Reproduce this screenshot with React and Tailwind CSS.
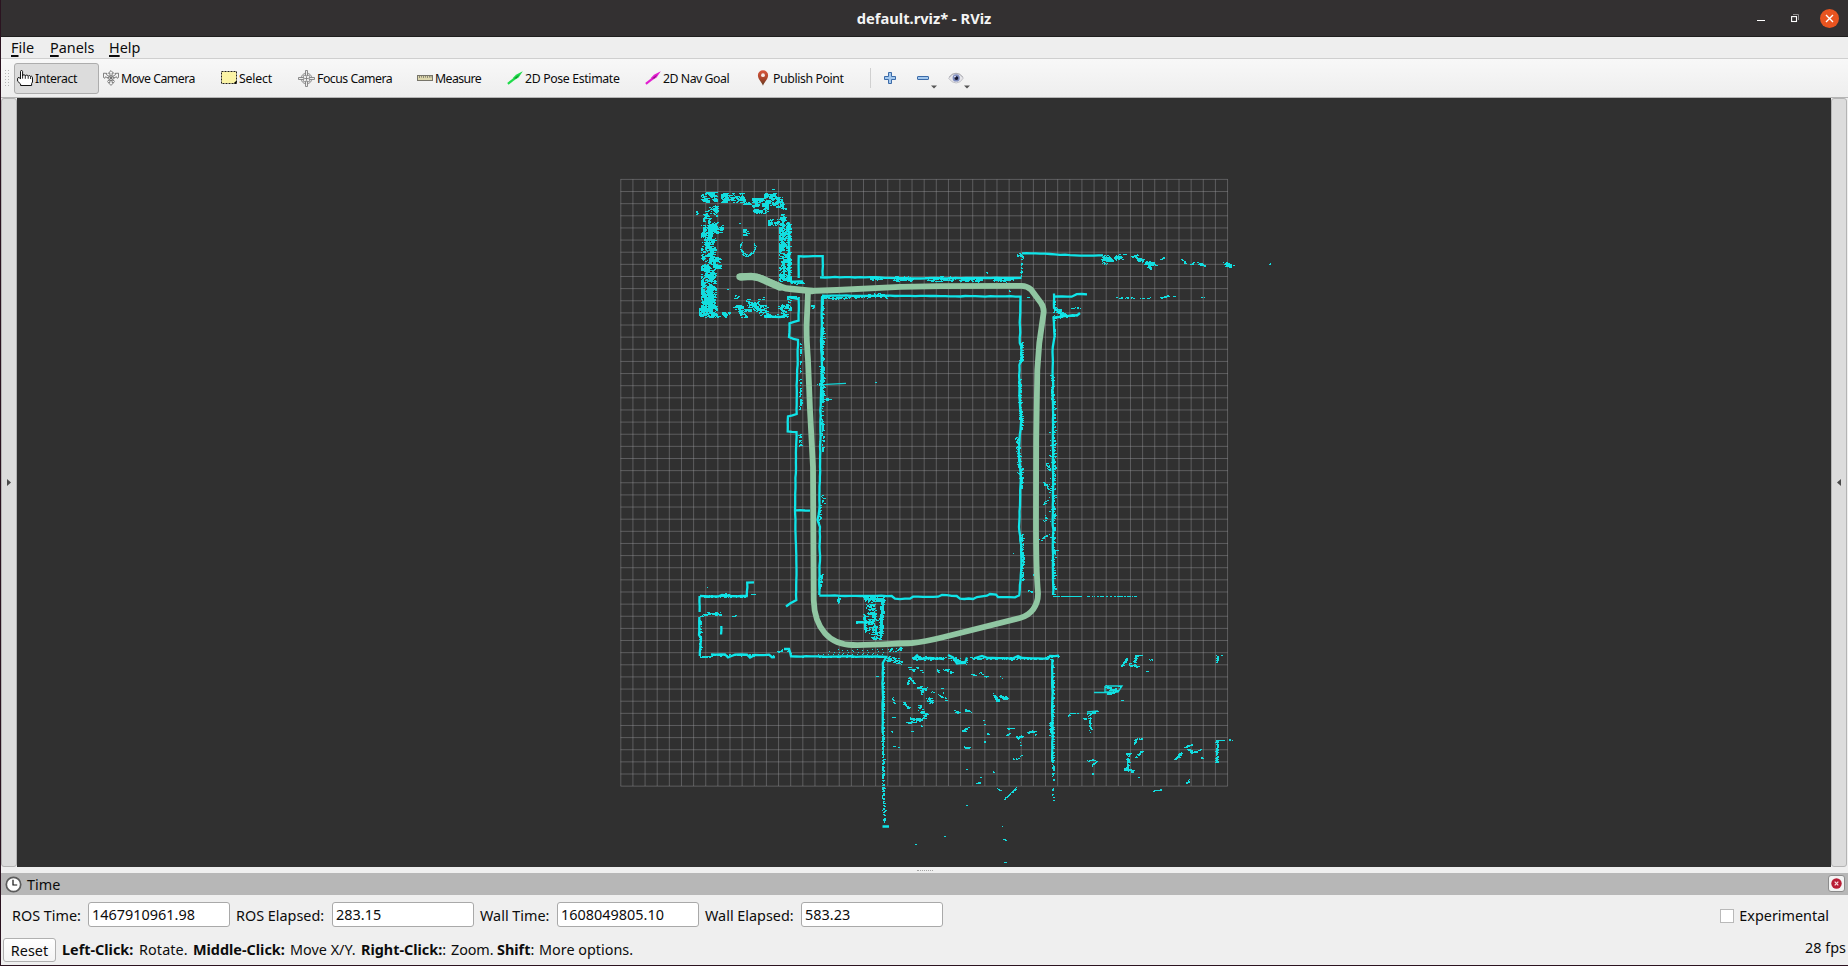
import React from "react";

/* ---------- point cloud ---------- */

let seed = 20201215;
function rnd() {
  seed = (seed * 1664525 + 1013904223) % 4294967296;
  return seed / 4294967296;
}
const gauss = () => (rnd() + rnd() + rnd() - 1.5) / 1.5;

// Straight or bent walls seen by the scanner.
const WALLS = [
  [[798.7, 278], [798.7, 256.2], [822.7, 256.2], [822.7, 276]],
  [[820, 277.3], [870, 277.2], [900, 278.4], [1021.5, 277.8]],
  [[822, 295.7], [900, 295.8], [1020.5, 296.6], [1019.8, 343], [1021.5, 347], [1021.8, 359], [1019.4, 365], [1019.4, 397], [1021.2, 420], [1018.8, 450], [1020.8, 480], [1019, 527], [1021.2, 545], [1021.2, 570], [1019.3, 595]],
  [[789, 297], [798.6, 299], [798.6, 320.7], [789.5, 323.3], [789, 337], [798, 340], [796.7, 400], [796.7, 414], [788, 416.5], [787.7, 431.5], [796.5, 432], [795.5, 483], [795, 510], [796.3, 560], [796.3, 600], [790, 603.5], [786, 606.5]],
  [[822, 297], [821.2, 345], [822, 370], [820.8, 400], [820, 467], [819.3, 510], [817.5, 520], [820, 527], [819.3, 595]],
  [[819.3, 595.5], [891.7, 596], [895, 598.7], [910, 598.7], [913, 596.7], [938, 596.7], [942, 595], [956.7, 596], [960, 598.7], [973, 599], [977, 597], [987, 595.7], [990, 594], [996, 594.5], [998, 597], [1015, 597.3], [1020, 595]],
  [[1054, 293.5], [1054, 308], [1062, 314]],
  [[1054, 296.7], [1071.7, 296.7], [1076.7, 294.2], [1087, 294.3]],
  [[1080, 313], [1077, 315.5], [1064, 316], [1053.5, 317.5], [1054.6, 336], [1052.8, 347], [1052.8, 400], [1053, 500], [1053, 595]],
  [[1022, 253.3], [1040, 253.6], [1080, 255.6], [1103, 255.3]],
  [[700, 596], [718, 596.5], [722, 595], [731, 596], [746.7, 596], [747.2, 582.7], [754, 582.3]],
  [[699.6, 596], [699.6, 612]],
  [[699.4, 617], [699, 635], [701, 638], [699.8, 656]],
  [[711, 654.5], [725, 654.5], [728, 657.5], [735, 654.6], [747, 654.7], [750, 657.5], [755, 655], [769, 654.7], [772, 657.2], [775, 657]],
  [[784, 649], [789, 649], [791, 656.3], [886, 656.8]],
  [[887, 656], [882.8, 663], [882.7, 733]],
  [[1052.3, 659], [1052.3, 762]],
  [[913, 659], [917, 655.5], [920, 659], [930, 658], [944, 659]],
  [[948, 655], [953, 657.5], [957, 663.5], [965, 663], [967, 657.5]],
  [[975, 658], [982, 656], [988, 658], [1013, 658.3], [1018, 656], [1022, 658], [1048, 658.5], [1050, 656], [1059, 655.7]],
  [[790, 281.5], [803, 281.5]],
  [[795, 510.3], [810, 510.7]],
  [[856, 622.3], [873, 622.3]],
  [[721.3, 626], [721, 634.5]],
  [[882.5, 826.5], [889, 826.5]],
  [[764, 316.6], [780, 317], [787, 315]],
  [[788.5, 222], [789.3, 281]],
];

const THIN = [
  [[826, 384.4], [846, 383.4]],
  [[1094, 692.5], [1112, 692.5]],
  [[1105, 686], [1122, 686], [1118, 692], [1105, 692], [1105, 686]],
  [[1087, 712], [1098, 711]],
];

// Extra returns scattered around a segment: x1, y1, x2, y2, spread, count
const SCATTER = [
  [870, 278, 882, 278, 3, 40], [893, 278.5, 912, 279, 4, 90],
  [900, 279, 910, 279, 3, 30], [926, 279, 954, 279, 4, 110], [960, 279, 982, 279, 4, 110], [993, 279, 1012, 279, 4, 100],
  [822, 297.5, 850, 297.5, 2, 60], [868, 295, 885, 295, 4, 60], [850, 297, 868, 297, 1.5, 16],
  [800, 342, 799.5, 410, 0.6, 40], [801, 400, 799, 405, 2, 14], [799, 432, 800, 445, 2.5, 24],
  [822, 295, 822, 410, 1.2, 170], [823, 326, 823, 342, 2.5, 40], [822, 366, 822, 402, 3, 130], [825, 399, 830, 399, 2, 26],
  [822, 410, 822, 450, 2, 60], [822, 495, 823, 503, 2, 14], [821, 574, 820, 588, 1.4, 30], [820, 505, 819, 523, 2, 24],
  [818, 384, 824, 384, 2, 12], [806, 306, 814, 306, 3, 26], [790, 282, 803, 283, 2, 36], [790, 297, 798, 297, 2, 24],
  [1021, 343, 1021, 361, 2.6, 80], [1019, 380, 1020, 420, 2, 100], [1021, 410, 1021, 430, 2.4, 50], [1017, 436, 1020, 480, 3, 80], [1021, 468, 1021, 488, 2.2, 60], [1022, 535, 1022, 580, 2.2, 100],
  [1054, 300, 1054, 340, 1.3, 40], [1052, 375, 1052, 400, 2.6, 44], [1054, 400, 1054, 480, 1.7, 80], [1054, 480, 1054, 595, 1.4, 90], [1054, 550, 1057, 550, 1.6, 14],
  [1055, 309, 1064, 316, 4, 70], [1070, 308, 1080, 308, 1.5, 14], [1053, 318, 1080, 314, 1.2, 30],
  [1020.7, 258, 1020.7, 277, 0.5, 16], [1016, 254, 1023, 257, 3, 20],
  [1115, 297.7, 1153, 297.7, 0.7, 28], [1160, 298, 1168, 295.5, 1.4, 28], [1173, 296, 1174, 296, 1.5, 4], [1198, 297, 1205, 297, 1, 4],
  [1053, 596, 1080, 596, 0.6, 40], [1080, 596, 1141, 596, 0.6, 34],
  [1046, 463, 1049, 468, 2.4, 16], [1044, 482, 1049, 491, 3, 18], [1043, 505, 1047, 499, 1.3, 8], [1043, 522, 1046, 516, 1.5, 8], [1040, 540, 1049, 534, 1.6, 14], [1032, 574, 1035, 575, 1.5, 8], [1028, 590, 1032, 592, 1.4, 7], [1050, 430, 1050, 560, 2.4, 22],
  [701, 596, 746, 596, 2, 90], [725, 594.5, 729, 594.5, 2, 16], [749, 594, 754, 594, 0.8, 4],
  [700, 616, 706, 614, 1.4, 20], [706, 613, 720, 614, 2.6, 56], [732, 617, 735, 614, 1.6, 6],
  [700, 620, 700, 655, 1.5, 44], [700, 656.5, 711, 656, 1.2, 34], [711, 655, 775, 655, 1.6, 70], [777, 652, 784, 649, 1.2, 12], [788, 650, 792, 656, 1.6, 20],
  [793, 656, 886, 657, 1, 60],
  [888, 650, 902, 648, 3, 26], [887, 658, 900, 662, 5, 60], [912, 658, 947, 658, 2.4, 90],
  [950, 658, 967, 662, 3, 40], [970, 658, 1050, 658.5, 1.8, 120], [1047, 656, 1059, 656, 1.2, 24],
  [882.7, 665, 882.7, 740, 1.4, 110], [882.5, 735, 882.7, 790, 1.6, 120], [882.7, 785, 883.7, 822, 1.7, 56],
  [1052.5, 660, 1052.5, 780, 1.3, 130], [1050, 722, 1051, 737, 2.8, 34], [1052.6, 785, 1052.8, 802, 0.5, 7],
  [838, 598, 839, 603, 2.4, 30], [863, 596, 866, 602, 2, 24], [864, 613, 865, 632, 2, 50], [855, 622, 873, 622, 1.6, 26],
  [866, 598, 882, 600, 3, 110], [882, 598, 880, 638, 2.6, 300], [870, 602, 874, 636, 8, 190], [871, 638, 881, 638, 2, 40],
  [908, 668, 913, 671, 3.4, 12], [917, 667, 923, 672, 2, 12], [937, 668, 938, 672, 2, 8], [943, 668, 952, 672, 3, 20],
  [907, 684, 909, 678, 1.4, 24], [909, 678, 914, 683, 1.4, 22], [918, 687, 925, 689, 3, 38], [921, 690, 922, 694, 1.5, 8],
  [892.5, 697, 893.5, 703, 1, 12], [903, 702, 908.5, 708, 1.2, 34], [928, 699, 932, 702, 4, 54], [918, 705, 921, 708, 2, 12], [920, 711, 927, 715, 3, 36], [905, 722, 914, 722, 1.4, 30], [910, 718.5, 922, 719, 1.6, 64], [916, 721, 925, 717, 2, 24],
  [892, 716, 894, 718, 1.6, 6], [937, 694, 942, 697, 0.8, 8], [931, 691, 933, 692, 1, 4], [940, 688, 942, 688, 0.6, 3], [944, 700, 946, 700, 0.6, 3], [955, 710, 958, 713, 1.6, 10],
  [941, 687.5, 946, 700, 1, 4], [993, 694, 998, 701, 2.4, 44], [1000, 696, 1006, 698, 3, 48], [971, 674, 975, 675, 1.5, 8], [979, 672, 987, 678, 2, 12], [994, 672, 1002, 678, 1, 3],
  [954, 711, 959, 712, 1.6, 9], [965, 710, 971, 711, 1.6, 12], [962, 732, 968, 727, 2, 20], [964, 747, 970, 747.5, 1.2, 16], [984, 719, 984, 746, 0.6, 3], [987, 734, 988, 734, 1, 3],
  [1007, 728, 1013, 728, 1, 18], [1006, 736, 1009, 733, 0.8, 8], [1017, 737, 1021, 737, 2.4, 30], [1020.5, 742, 1020.5, 757, 0.5, 5], [1027, 732.5, 1035, 730.5, 1.5, 30], [1035, 733, 1035, 736, 0.6, 4], [1010, 759, 1018, 758, 0.8, 6],
  [976, 783, 980, 782, 1.4, 20], [979, 777, 980, 777, 0.6, 2], [996, 788, 1000, 790, 1, 8], [1004, 799, 1010, 793, 0.8, 18], [1011, 792, 1017, 786, 1, 14],
  [1121, 666, 1126, 659, 1.2, 36], [1127, 664, 1138, 666, 2.4, 34], [1134, 662, 1136, 655, 1.2, 30], [1135, 655, 1141, 655, 0.9, 18], [1146, 658, 1153, 660, 1, 5], [1146, 671, 1147, 671, 1, 3],
  [1106, 687, 1118, 691, 3, 50], [1107, 693, 1113, 693, 2, 24], [1118, 686.5, 1122, 686, 0.8, 8], [1121, 700, 1122, 700, 0.6, 3],
  [1068, 716, 1070, 713, 1, 12], [1070, 713, 1077, 713, 0.8, 18], [1087, 714, 1097, 711, 1, 30], [1089, 714, 1090, 732, 1.8, 44], [1083, 718, 1086, 719, 1.4, 8],
  [1087, 760, 1096, 760, 1.2, 18], [1091, 766, 1096, 761, 1, 18], [1092, 773, 1092, 774, 0.4, 2],
  [1134, 744, 1135, 739, 1, 14], [1135, 739, 1142, 738.5, 0.7, 14], [1126, 753, 1130, 754, 2.4, 24], [1128, 754, 1127, 768, 2, 34], [1124, 769, 1133, 771, 2.6, 44], [1135, 757, 1142, 751, 1.2, 24], [1137, 777, 1138, 777, 0.6, 3],
  [1175, 759, 1181, 752, 1.8, 32], [1184, 747, 1191, 745, 1.4, 22], [1187, 749, 1192, 751, 1.2, 12], [1190, 753, 1202, 749, 1.2, 34], [1201, 757, 1202, 760, 0.5, 3], [1186, 783, 1189, 779, 1.2, 8], [1153, 791, 1161, 789, 1.2, 14],
  [1216.5, 740, 1216, 763, 1.6, 76], [1217, 740, 1233, 739.5, 0.6, 14], [1216, 663, 1217, 655, 0.9, 20], [1221, 655, 1222, 655, 0.5, 2],
  [1002, 825, 1002, 826, 0.4, 2], [1003, 839, 1006, 840, 0.8, 5], [1004, 862, 1005, 862, 0.5, 3], [966, 805, 967, 805, 0.5, 3], [943, 835, 944, 836, 0.4, 2], [915, 843.5, 916, 844, 0.3, 2],
  [1103, 258, 1111, 260, 4, 90], [1114, 259, 1120, 256, 3.6, 54], [1123, 254, 1126, 254, 1, 5], [1131, 256, 1138, 255, 1.6, 14], [1136, 258, 1142, 261, 3, 50], [1145, 263, 1154, 264, 3.4, 80], [1148, 266, 1150, 269, 2, 24], [1161, 259, 1163, 257, 1.4, 8],
  [1181, 259, 1185, 264, 1.2, 12], [1191, 264, 1194, 262, 1.4, 10], [1198, 263, 1205, 266, 2, 26], [1225, 264, 1231, 266, 3, 34], [1269, 263, 1271, 265, 1.4, 4],
  [875, 382, 875.6, 382, 0.6, 3], [986, 272, 987, 273, 0.5, 3], [1009, 290, 1010, 292, 0.6, 3], [1027, 296, 1028, 297, 0.5, 2], [739, 223, 740, 223, 0.4, 2], [727, 289, 728, 290, 0.4, 2], [772, 188, 773, 189, 0.4, 2], [696, 211, 697, 214, 1, 5],
  [876, 674, 876.5, 677, 0.5, 4], [891, 731, 892, 732, 0.5, 2], [911, 731, 912, 731, 0.5, 2], [920, 725, 921, 726, 0.6, 3], [893, 746, 900, 747, 0.6, 3], [706, 587, 707, 587, 0.4, 2], [1013, 553, 1014, 553, 0.4, 2], [993, 771, 994, 772, 0.4, 2], [966, 769, 967, 769, 0.4, 2], [983, 720, 984, 720, 0.4, 2],
];

// Cluttered room: x, y, w, h, count
const CLUTTER = [
  [703, 198, 5, 34, 80], [708, 205, 9, 28, 190], [701, 192, 15, 9, 130], [721, 193, 23, 9, 260], [743, 201, 9, 3, 30],
  [752, 198, 15, 15, 250], [764, 193, 11, 12, 200], [776, 197, 7, 10, 80], [780, 205, 5, 16, 90], [768, 218, 11, 7, 80],
  [779, 222, 11, 29, 430], [779, 251, 11, 30, 430], [701, 225, 10, 45, 560], [701, 270, 10, 44, 560], [709, 226, 6, 40, 200], [709, 266, 6, 40, 200], [713, 257, 7, 11, 90], [716, 225, 7, 7, 40], [702, 294, 14, 18, 230],
  [699, 308, 9, 8, 80], [705, 312, 24, 4.5, 110], [732, 305, 10, 4, 50], [738, 309, 8, 8, 70], [747, 302, 11, 9, 140],
  [759, 305, 9, 12, 80], [764, 314, 24, 3, 50], [778, 304, 11, 6, 50], [781, 308, 6, 8, 30], [787, 296, 3, 14, 30],
  [733, 294, 8, 4, 10], [746, 296, 5, 6, 14], [758, 297, 6, 4, 6], [743, 229, 6, 6, 34],
];

// Hollow round obstacles: cx, cy, r, start angle, sweep, count
const ARCS = [[747.5, 247, 7.4, -0.6, 4.4, 70], [746.5, 251.5, 4.5, 0.2, 2.8, 36], [1106, 259, 4.5, 0, 6.3, 40]];

function buildPoints() {
  let fine = "";
  const dot = (x, y, s = 1) => {
    fine += `M${Math.round(x)} ${Math.round(y)}h${s}v1h-${s}z`;
  };
  SCATTER.forEach(([x1, y1, x2, y2, s, n]) => {
    for (let i = 0; i < n; i++) {
      const t = rnd();
      dot(x1 + (x2 - x1) * t + gauss() * s * 0.9, y1 + (y2 - y1) * t + gauss() * s * 0.9, rnd() > 0.5 ? 2 : 1);
    }
  });
  CLUTTER.forEach(([x, y, w, h, n]) => {
    let cx = x + rnd() * w;
    let cy = y + rnd() * h;
    for (let i = 0; i < n; i++) {
      if (rnd() < 0.16) {
        cx = x + rnd() * w;
        cy = y + rnd() * h;
      }
      const px = Math.min(x + w, Math.max(x, cx + gauss() * 3.4));
      const py = Math.min(y + h, Math.max(y, cy + gauss() * 3.4));
      dot(px, py, rnd() > 0.4 ? 2 : 1);
    }
  });
  ARCS.forEach(([cx, cy, r, a, sweep, n]) => {
    for (let i = 0; i < n; i++) {
      const t = a + sweep * rnd();
      dot(cx + Math.cos(t) * r + gauss(), cy + Math.sin(t) * r + gauss());
    }
  });
  // Evenly spaced returns between the lower corridor wall and the track.
  for (let x = 818; x <= 884; x += 4.9) {
    dot(x, 654);
    if (x > 826) dot(x + 1, 651 + rnd() * 2);
    if (x > 834) dot(x, 648 + rnd() * 2);
  }
  return fine;
}
const POINTS = buildPoints();

const toPath = (pts) => "M" + pts.map((p) => p.join(" ")).join("L");

// Rough edges: every wall gets small sideways steps along its length.
const roughPath = (pts) => {
  let d = "";
  for (let i = 0; i < pts.length - 1; i++) {
    const [x1, y1] = pts[i];
    const [x2, y2] = pts[i + 1];
    const len = Math.hypot(x2 - x1, y2 - y1);
    const steps = Math.max(1, Math.round(len / 5));
    for (let k = 0; k <= steps; k++) {
      const t = k / steps;
      const j = k === 0 || k === steps ? 0 : gauss() * 0.5;
      const nx = -(y2 - y1) / (len || 1);
      const ny = (x2 - x1) / (len || 1);
      d += `${d ? "L" : "M"}${(x1 + (x2 - x1) * t + nx * j).toFixed(1)} ${(y1 + (y2 - y1) * t + ny * j).toFixed(1)}`;
    }
  }
  return d;
};
const WALL_PATH = WALLS.map(roughPath).join("");
const THIN_PATH = THIN.map(toPath).join("");

const GRID = Array.from({ length: 51 }, (_, i) => i);

function Scene() {
  return (
    <svg className="block h-[769px] w-[1814px]" viewBox="17 98 1814 769">
      <g stroke="#a0a0a4" strokeOpacity="0.4" strokeWidth="1">
        {GRID.map((i) => (
          <React.Fragment key={i}>
            <line x1={620.8 + i * 12.135} x2={620.8 + i * 12.135} y1="179.3" y2="786" />
            <line y1={179.4 + i * 12.135} y2={179.4 + i * 12.135} x1="620.5" x2="1227.8" />
          </React.Fragment>
        ))}
      </g>
      <path d={WALL_PATH} fill="none" stroke="#10e4e8" strokeWidth="2.3" />
      <path d={THIN_PATH} fill="none" stroke="#14d5d8" strokeWidth="1.4" />
      <path d={POINTS} fill="#10e8ea" fillOpacity="0.94" />
      <path
        d="M808 292 L806.6 325 Q806.3 337 808 360 L810 410 L813 467 L813.7 600 C814.5 629 830 645 853 645 C875 645.3 890 643.8 912 643 C924 642 934 639.5 944 637 L1020 618 C1031 615 1038.3 606 1038 593 C1036 570 1036 540 1036 520 L1036.2 440 L1037.3 370 L1039.3 343 L1043.7 312 Q1043.8 307 1041 303 L1031 289.5 Q1027 286 1021.7 285.9 L940 286.1 L900 286.8 L837 290 L808 291"
        fill="none"
        stroke="#90c6a2"
        strokeWidth="5.8"
        strokeLinejoin="round"
      />
      <path
        d="M739.5 276.8 L751 276.2 Q759 276.5 765 280 L780 286.5 Q786 288.8 791.7 289 L812 291"
        fill="none"
        stroke="#90c6a2"
        strokeWidth="6.4"
        strokeLinecap="round"
        strokeLinejoin="round"
      />
      <path d="M741 277 L751 276.4 Q759 277 766 281 L780 287" fill="none" stroke="#90c6a2" strokeWidth="7.4" strokeLinecap="round" />
    </svg>
  );
}

/* ---------- icons ---------- */

const HandIcon = () => (
  <svg className="h-4 w-4 shrink-0" viewBox="0 0 16 16">
    <path
      d="M3.5 9V1.6Q3.5.5 4.5.5T5.6 1.6V6 5.6Q5.6 4.7 6.9 4.8 8.2 4.8 8.3 5.8 8.5 5 9.8 5.1 11.1 5.2 11.3 6.2 11.6 5.6 12.4 5.6 13.2 5.6 13.6 6.4 14 6.1 14.7 6.3 15.5 6.7 15.5 7.6V12L14.6 13.6V15.5H3.6V14L.6 11.2V8.2Q.8 7.4 2 7.6L3.5 8.6"
      fill="#fff"
      stroke="#111"
      strokeWidth="1"
      strokeLinejoin="round"
    />
    <path d="M5.6 5.5V8.6M8.3 5.8V8.8M11.2 6.2V8.8M13.6 6.4V9" stroke="#111" strokeWidth="0.9" />
  </svg>
);

const MoveCameraIcon = () => (
  <svg className="h-4 w-4 shrink-0" viewBox="0 0 16 16" fill="#f4f4f4" stroke="#707070" strokeWidth="0.9">
    <path d="M8 .6 10.6 3.2H9.1V6H6.9V3.2H5.4Z" />
    <path d="M8 15.4 10.8 12.5H9.1V10H6.9v2.5H5.2Z" />
    <path d="M.5 3.2 4 3.4 3.4 4.6 6.2 6.4 5.4 8 2.4 6.8 1.8 8.3.4 7.4Z" />
    <path d="M15.5 3.2 12 3.4l.6 1.2-2.8 1.8.8 1.6 3-1.2.6 1.5 1.4-.9Z" />
    <path d="M4.2 11.5 6.8 9.4M11.8 11.5 9.2 9.4" />
    <path d="M8 5.6 11.4 8 8 11 4.6 8Z" fill="#ddd" />
    <circle cx="8" cy="8" r="1" fill="#555" />
  </svg>
);

const SelectIcon = () => (
  <svg className="h-4 w-4 shrink-0" viewBox="0 0 16 16">
    <rect x="0.5" y="1.5" width="15" height="12" fill="#fbf4a6" stroke="#222" strokeDasharray="2 1" />
    <path d="M15.6 10.4V13.6H12.4Z" fill="#000" />
  </svg>
);

const FocusIcon = () => (
  <svg className="h-[17px] w-[17px] shrink-0" viewBox="0 0 17 17" fill="none" stroke="#808080" strokeWidth="0.9">
    <circle cx="8.5" cy="8.5" r="5.4" />
    <circle cx="8.5" cy="8.5" r="3.9" />
    <path d="M7.5.5h2v5.3h-2zM7.5 11.2h2v5.3h-2zM.5 7.5h5.3v2H.5zM11.2 7.5h5.3v2h-5.3z" fill="#ececec" />
    <path d="M8.5 6.4v4.2M6.4 8.5h4.2" />
  </svg>
);

const MeasureIcon = () => (
  <svg className="h-4 w-4 shrink-0" viewBox="0 0 16 16">
    <rect x="0.5" y="5.5" width="15" height="5" fill="#ddd7ad" stroke="#77756a" />
    <path d="M2.5 6v2M4.5 6v1.6M6.5 6v2M8.5 6v1.6M10.5 6v2M12.5 6v1.6M14 6v1.6" stroke="#77756a" strokeWidth="0.8" />
  </svg>
);

const ArrowIcon = ({ color, dark }) => (
  <svg className="h-4 w-4 shrink-0" viewBox="0 0 16 16">
    <path d="M.9 13.8 7.2 8.8" stroke={color} strokeWidth="2.2" />
    <path d="M15.8 1.2 11.6 7.6 7.2 10.2 5.8 8 9 4.8Z" fill={color} />
    <path d="M7 8.6 12.4 4.4 9.4 8.6Z" fill={dark} />
  </svg>
);

const PinIcon = () => (
  <svg className="h-4 w-4 shrink-0" viewBox="0 0 16 16">
    <defs>
      <linearGradient id="pin" x1="0" x2="0" y1="0" y2="1">
        <stop offset="0" stopColor="#d9573d" />
        <stop offset="0.55" stopColor="#a8452c" />
        <stop offset="1" stopColor="#5e3a20" />
      </linearGradient>
    </defs>
    <path d="M8 15.8C7 12.2 2.9 9.6 2.9 5.3A5.1 5 0 0 1 13.1 5.3C13.1 9.6 9 12.2 8 15.8Z" fill="url(#pin)" />
    <circle cx="8" cy="5.2" r="1.9" fill="#f7ece8" />
  </svg>
);

const PlusIcon = () => (
  <svg className="h-4 w-4" viewBox="0 0 16 16">
    <path d="M6.5 2.5h3v4h4v3h-4v4h-3v-4h-4v-3h4z" fill="#a3c8ee" stroke="#3c6ba8" strokeLinejoin="round" />
  </svg>
);
const MinusIcon = () => (
  <svg className="h-4 w-4" viewBox="0 0 16 16">
    <rect x="2.5" y="6.5" width="11" height="3" rx="0.4" fill="#a3c8ee" stroke="#3c6ba8" />
  </svg>
);
const EyeIcon = () => (
  <svg className="h-4 w-4" viewBox="0 0 16 16">
    <path d="M.6 8.3Q3.6 3.4 8 3.4T15.4 8Q12.6 13 8.2 13T.6 8.3Z" fill="#e6e6ea" stroke="#b9b9c0" strokeWidth="0.8" />
    <path d="M1 7.2Q4 3.2 8 3.2T15 7.2" fill="none" stroke="#a5a5ab" strokeWidth="0.8" />
    <circle cx="8.2" cy="7.9" r="3.6" fill="#7d8bbd" />
    <circle cx="8.4" cy="8.1" r="1.9" fill="#14162e" />
    <circle cx="7" cy="6.6" r="0.9" fill="#dfe4f6" />
  </svg>
);
const Caret = ({ className }) => (
  <svg className={"absolute h-1 w-1.5 " + className} viewBox="0 0 6 4">
    <path d="M0 .4h6L3 3.4Z" fill="#555" />
  </svg>
);

const TOOLS = [
  [<HandIcon key="i" />, "Interact", "w-[86px] -tracking-[0.38px]"],
  [<MoveCameraIcon key="i" />, "Move Camera", "w-[118px] -tracking-[0.52px]"],
  [<SelectIcon key="i" />, "Select", "w-[77px] -tracking-[0.17px]"],
  [<FocusIcon key="i" />, "Focus Camera", "w-[119px] -tracking-[0.5px]"],
  [<MeasureIcon key="i" />, "Measure", "w-[90px] -tracking-[0.6px]"],
  [<ArrowIcon key="i" color="#1fdc4a" dark="#0f8a2c" />, "2D Pose Estimate", "w-[138px] -tracking-[0.36px]"],
  [<ArrowIcon key="i" color="#e21fd0" dark="#8c1080" />, "2D Nav Goal", "w-[110px] -tracking-[0.47px]"],
  [<PinIcon key="i" />, "Publish Point", "w-[115px] -tracking-[0.4px]"],
];

/* ---------- chrome ---------- */

function TitleBar() {
  return (
    <header className="grid h-[37px] grid-cols-[1fr_auto_1fr] items-center border-b border-[#1f1e1e] bg-[#333031]">
      <span />
      <h1 className="mr-px text-[14.7px] font-bold text-[#f4f4f4]">default.rviz* - RViz</h1>
      <div className="flex items-center justify-end pr-[9px]">
        <svg className="mr-[26px] h-[18px] w-2" viewBox="0 0 8 18">
          <rect x="0" y="11" width="8" height="1" fill="#fff" />
        </svg>
        <svg className="mr-[21px] h-[18px] w-[8px] overflow-visible" viewBox="0 0 8 18">
          <rect x="0.6" y="7.6" width="4.9" height="4.9" fill="none" stroke="#fff" strokeWidth="1.1" />
          <path d="M2 5.5H7.5V11" fill="none" stroke="#8d8b8b" strokeWidth="1" />
        </svg>
        <span className="grid h-[19px] w-[19px] place-items-center rounded-full bg-[#e95420]">
          <svg className="h-[9px] w-[9px]" viewBox="0 0 9 9">
            <path d="M1 1 8 8M8 1 1 8" stroke="#fff" strokeWidth="1.4" />
          </svg>
        </span>
      </div>
    </header>
  );
}

function MenuItem({ text, className }) {
  return (
    <span className={className}>
      <span className="underline decoration-[1.5px] underline-offset-[2px]">{text[0]}</span>
      {text.slice(1)}
    </span>
  );
}

function Toolbar() {
  return (
    <div className="flex h-[39px] items-center border-b border-[#b4b4b4] bg-linear-to-b from-[#f8f8f8] to-[#eeeeee] pl-1 text-[12.3px]">
      <svg className="mr-1 h-4 w-[5px]" viewBox="0 0 5 16">
        {[0, 3, 6, 9, 12, 15].map((y) => (
          <path key={y} d={`M0 ${y}h1v1h-1zM3 ${y}h1v1h-1z`} fill="#b5b5b5" />
        ))}
      </svg>
      <div className="flex h-8 items-center">
        <div className="-mr-[85px] h-[31px] w-[85px] shrink-0 rounded-[3px] border border-[#adadad] bg-[#dcdcdc]" />
        <div className="relative flex items-center pl-[3px]">
          {TOOLS.map(([icon, label, cls]) => (
            <div key={label} className={"flex shrink-0 items-center gap-[2px] whitespace-nowrap " + cls}>
              {icon}
              <span className="pt-[2px]">{label}</span>
            </div>
          ))}
        </div>
      </div>
      <div className="mr-[11px] h-5 w-px bg-[#d0d0d0]" />
      <div className="flex items-center gap-[17px]">
        <PlusIcon />
        <span className="relative"><MinusIcon /><Caret className="top-[15px] left-4" /></span>
        <span className="relative"><EyeIcon /><Caret className="top-[15px] left-4" /></span>
      </div>
    </div>
  );
}

function SideHandle({ right }) {
  return (
    <div className="grid w-4 shrink-0 place-items-center rounded-[3px] border border-[#b4b4b4] bg-[#dcdcdc]">
      <svg className="h-[7px] w-1" viewBox="0 0 4 7">
        <path d={right ? "M4 0V7L0 3.5Z" : "M0 0V7L4 3.5Z"} fill="#4a4a4a" />
      </svg>
    </div>
  );
}

function Field({ label, value, labelClass }) {
  return (
    <label className="flex items-center">
      <span className={"shrink-0 pt-[3px] whitespace-nowrap " + labelClass}>{label}</span>
      <span className="flex h-[25px] w-[142px] items-center rounded-[3px] border border-[#a9a9a9] bg-white pt-[2px] pl-[3px] text-[14.45px]">{value}</span>
    </label>
  );
}

export default function App() {
  return (
    <div className="flex h-[966px] w-[1848px] flex-col overflow-hidden border-b border-l border-[#2b1320] bg-[#efefef] font-['Noto_Sans','Open_Sans',sans-serif] text-[14.4px] leading-none text-[#0c0c0c]">
      <TitleBar />
      <nav className="flex h-[22px] items-center border-b border-[#cfcfcf] bg-[#eeeeee] pt-[2px] pl-2.5">
        <MenuItem text="File" className="w-[39px]" />
        <MenuItem text="Panels" className="w-[59px]" />
        <MenuItem text="Help" className="" />
      </nav>
      <Toolbar />

      <main className="flex h-[769px] shrink-0 bg-[#efefef]">
        <SideHandle />
        <div className="w-[1814px] shrink-0 overflow-hidden bg-[#303030]">
          <Scene />
        </div>
        <SideHandle right />
      </main>

      <div className="flex h-1.5 shrink-0 items-center justify-center">
        <span className="w-4 border-t border-dotted border-[#a5a5a5]" />
      </div>

      <section className="flex h-[22px] shrink-0 items-center bg-[#b7b7b7] pr-[3px] pl-1">
        <svg className="h-[17px] w-[17px]" viewBox="0 0 17 17">
          <circle cx="8.5" cy="8.5" r="7.2" fill="#fff" stroke="#5c5c5c" strokeWidth="1.7" />
          <path d="M8 3.8V9H12.2" fill="none" stroke="#111" strokeWidth="1.2" />
        </svg>
        <span className="ml-[5px] flex-1 pt-[3px]">Time</span>
        <span className="mb-0.5 grid h-[17px] w-[17px] place-items-center rounded-[3px] border border-[#8c8c8c] bg-[#f3f3f3]">
          <svg className="h-[11px] w-[11px]" viewBox="0 0 11 11">
            <circle cx="5.5" cy="5.5" r="5.2" fill="#b81d35" />
            <path d="M3.7 3.7 7.3 7.3M7.3 3.7 3.7 7.3" stroke="#f6dfe2" strokeWidth="1.2" />
          </svg>
        </span>
      </section>

      <section className="flex h-[39px] shrink-0 items-center pt-0 pl-[11px]">
        <Field label="ROS Time:" value="1467910961.98" labelClass="w-[76px]" />
        <Field label="ROS Elapsed:" value="283.15" labelClass="w-[102px] pl-1.5" />
        <Field label="Wall Time:" value="1608049805.10" labelClass="w-[83px] pl-1.5" />
        <Field label="Wall Elapsed:" value="583.23" labelClass="w-[102px] pl-1.5" />
        <label className="ml-auto flex items-center gap-[5px] pt-0.5 pr-[19px]">
          <span className="h-3.5 w-3.5 border border-[#b9b9b9] bg-white" />
          <span className="pt-[2px]">Experimental</span>
        </label>
      </section>

      <footer className="flex flex-1 items-center pb-px pl-0.5">
        <button className="mt-0.5 h-6 w-[53px] rounded-[3px] border border-[#b0b0b0] bg-linear-to-b from-white to-[#f4f4f4] pt-[3px]">Reset</button>
        <p className="ml-1.5 flex pt-[3px] whitespace-nowrap">
          <b className="w-[77px]">Left-Click:</b>
          <span className="w-[54px] tracking-[0.1px]">Rotate.</span>
          <b className="w-[97px]">Middle-Click:</b>
          <span className="w-[71px]">Move X/Y.</span>
          <span className="w-[90px]"><b>Right-Click:</b>:</span>
          <span className="w-[46px] -tracking-[0.1px]">Zoom.</span>
          <span className="w-[42px]"><b>Shift</b>:</span>
          <span>More options.</span>
        </p>
        <span className="mr-0.5 mb-[2px] ml-auto">28 fps</span>
      </footer>
    </div>
  );
}
